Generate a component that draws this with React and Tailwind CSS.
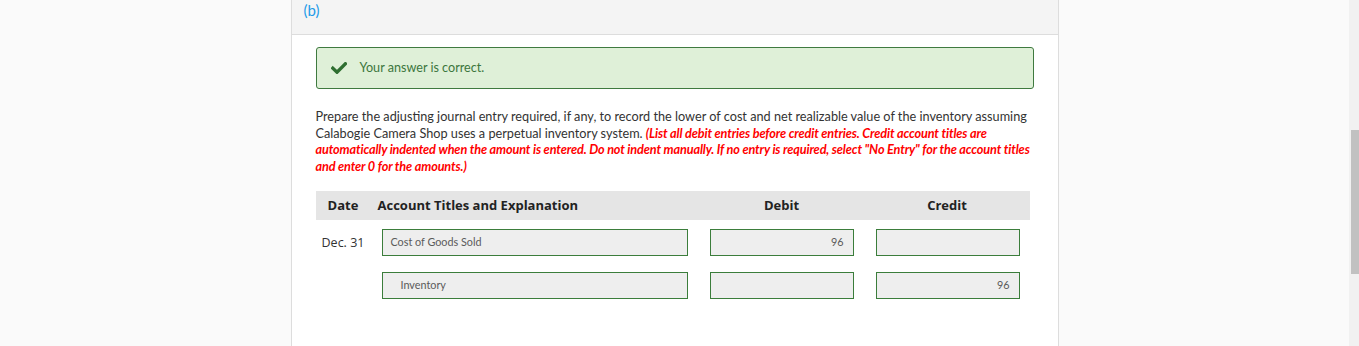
import React from 'react';

const rows = [
    { date: 'Dec. 31', account: 'Cost of Goods Sold', debit: '96', credit: '', indent: false },
    { date: '', account: 'Inventory', debit: '', credit: '96', indent: true },
];

const Field = ({ value, align = 'left', indent = false, width }) => (
    <div
        className={`h-[27px] ${width} bg-[#eeeeee] border border-[#3b7d3b] flex items-center text-[10.8px] text-[#5a5a5a] ${
            align === 'right' ? 'justify-end pr-[9px]' : indent ? 'pl-[18px]' : 'pl-[8px]'
        }`}
    >
        {value}
    </div>
);

const App = () => {
    return (
        <div className="flex w-[1359px] h-[346px] bg-[#fafafa] overflow-hidden" style={{ fontFamily: 'Lato, "Open Sans", sans-serif' }}>
            <div className="flex-1 flex justify-center">
                <div className="w-[768px] h-full bg-white border-x border-[#dddddd] flex flex-col">
                    {/* Part header */}
                    <div className="h-[35px] bg-[#f4f4f4] border-b border-[#dddddd] px-[12px]">
                        <span className="block text-[15px] leading-[20px] text-[#1f9be8]">(b)</span>
                    </div>

                    <div className="px-[24px] pt-[12px]">
                        {/* Result banner */}
                        <div className="h-[42px] w-[718px] bg-[#dff0d8] border border-[#3f7a3f] rounded-[3px] flex items-center pl-[14px]">
                            <svg width="16" height="12" viewBox="0 0 16 12" className="shrink-0">
                                <path d="M1.8 6.2 L6 10.2 L14.4 1.8" fill="none" stroke="#2f6f31" strokeWidth="3.4" strokeLinecap="square" />
                            </svg>
                            <span className="ml-[13px] text-[12.6px] text-[#3c763d]">Your answer is correct.</span>
                        </div>

                        {/* Question text */}
                        <p className="mt-[19px] text-[12.7px] leading-[16.5px] text-[#333333]">
                            Prepare the adjusting journal entry required, if any, to record the lower of cost and net realizable value of the inventory assuming Calabogie Camera Shop uses a perpetual inventory system.{' '}
                            <span className="font-bold italic text-[#ff0000] tracking-[-0.14px]">
                                (List all debit entries before credit entries. Credit account titles are automatically indented when the amount is entered. Do not indent manually. If no entry is required, select "No Entry" for the account titles and enter 0 for the amounts.)
                            </span>
                        </p>

                        {/* Journal table */}
                        <div className="mt-[17px] w-[714px]">
                            <div
                                className="h-[29px] bg-[#e5e5e5] flex items-center text-[13px] font-bold text-[#222222]"
                                style={{ fontFamily: '"Open Sans", Lato, sans-serif' }}
                            >
                                <div className="w-[55px] text-center">Date</div>
                                <div className="w-[328px] pl-[7px]">Account Titles and Explanation</div>
                                <div className="w-[166px] text-center">Debit</div>
                                <div className="w-[165px] text-center">Credit</div>
                            </div>

                            <div className="flex flex-col gap-[16px] pt-[9px]">
                                {rows.map((r, i) => (
                                    <div key={i} className="flex items-center">
                                        <div
                                            className="w-[55px] text-center text-[12.5px] text-[#333333] pt-[1px]"
                                            style={{ fontFamily: '"Open Sans", Lato, sans-serif' }}
                                        >
                                            {r.date}
                                        </div>
                                        <div className="w-[328px] px-[11px]">
                                            <Field value={r.account} indent={r.indent} width="w-[306px]" />
                                        </div>
                                        <div className="w-[166px] px-[11px]">
                                            <Field value={r.debit} align="right" width="w-[144px]" />
                                        </div>
                                        <div className="w-[165px] px-[11px]">
                                            <Field value={r.credit} align="right" width="w-[144px]" />
                                        </div>
                                    </div>
                                ))}
                            </div>
                        </div>
                    </div>
                </div>
            </div>

            {/* Scrollbar */}
            <div className="w-[10px] h-full bg-[#f1f1f1] flex justify-end pt-[130px]">
                <div className="w-[8px] h-[144px] bg-[#c1c1c1]" />
            </div>
        </div>
    );
};

export default App;
